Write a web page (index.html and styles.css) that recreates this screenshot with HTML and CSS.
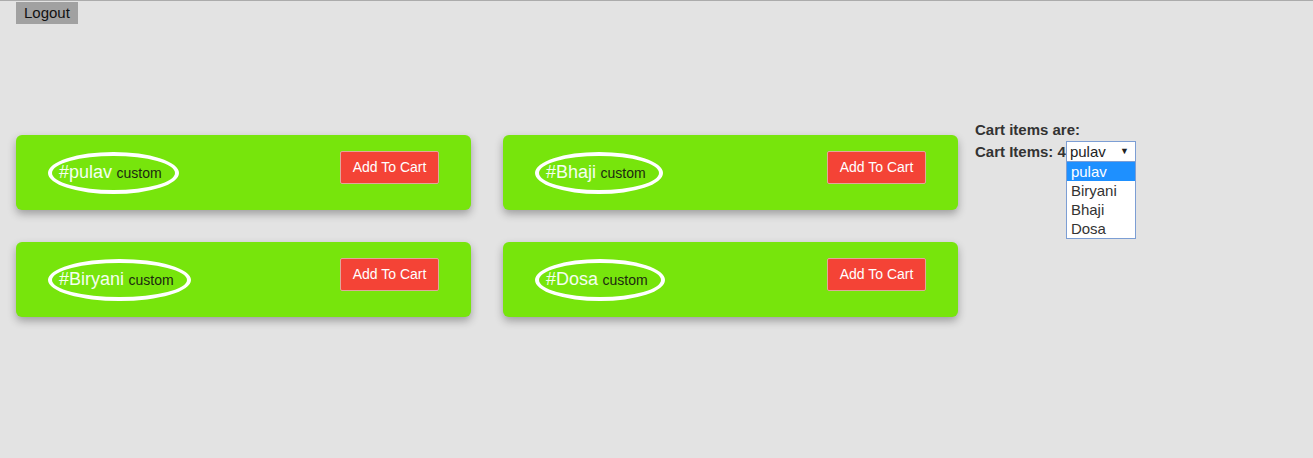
FILE: index.html
```html
<!DOCTYPE html>
<html>
<head>
<meta charset="utf-8">
<link rel="stylesheet" href="styles.css">
</head>
<body>
<div class="topbar"><button class="logout">Logout</button></div>
<div class="main">
  <div class="cards">
    <div class="card">
      <span class="tag"><span class="name">#pulav</span> <span class="custom">custom</span></span>
      <button class="add">Add To Cart</button>
    </div>
    <div class="card">
      <span class="tag"><span class="name">#Bhaji</span> <span class="custom">custom</span></span>
      <button class="add">Add To Cart</button>
    </div>
    <div class="card">
      <span class="tag"><span class="name">#Biryani</span> <span class="custom">custom</span></span>
      <button class="add">Add To Cart</button>
    </div>
    <div class="card">
      <span class="tag"><span class="name">#Dosa</span> <span class="custom">custom</span></span>
      <button class="add">Add To Cart</button>
    </div>
  </div>
  <div class="cart">
    <div class="cart-title">Cart items are:</div>
    <div class="cart-line">
      <span class="cart-count">Cart Items: 4</span>
      <div class="select">
        <div class="select-box"><span>pulav</span><span class="arrow">▼</span></div>
        <ul class="options">
          <li class="active">pulav</li>
          <li>Biryani</li>
          <li>Bhaji</li>
          <li>Dosa</li>
        </ul>
      </div>
    </div>
  </div>
</div>
</body>
</html>
```
FILE: styles.css
```css
html, body {
  margin: 0;
  padding: 0;
}
body {
  background: #e3e3e3;
  font-family: "Liberation Sans", Arial, sans-serif;
  border-top: 1px solid #ababab;
  min-height: 457px;
}
.topbar {
  padding: 1px 16px 0;
}
.logout {
  display: block;
  background: #a1a1a1;
  border: none;
  color: #111;
  font-family: "Liberation Sans", Arial, sans-serif;
  font-size: 15px;
  line-height: 17px;
  height: 22px;
  padding: 2px 8px 3px 8px;
  margin: 0;
}
.main {
  display: flex;
  align-items: flex-start;
  padding: 0 16px;
  margin-top: 97px;
}
.cards {
  display: grid;
  grid-template-columns: 455px 455px;
  column-gap: 32px;
  row-gap: 32px;
  margin-top: 14px;
}
.card {
  background: #77e50c;
  border-radius: 6px;
  box-shadow: 0 4px 9px rgba(0, 0, 0, 0.3);
  height: 75px;
  box-sizing: border-box;
  padding: 16px 32px 0 32px;
  display: flex;
  justify-content: space-between;
  align-items: flex-start;
}
.tag {
  margin-top: 1px;
  border: 4px solid #fff;
  border-radius: 50%;
  padding: 7px 13px 7px 7px;
  line-height: 19px;
  white-space: nowrap;
}
.name {
  color: #f4fff0;
  font-size: 18px;
}
.custom {
  color: #1c2a10;
  font-size: 14px;
}
.add {
  background: #f44336;
  color: #fff;
  border: 1px solid #e0a89a;
  border-radius: 2px;
  font-family: "Liberation Sans", Arial, sans-serif;
  font-size: 14px;
  line-height: 17px;
  padding: 7px 11px;
  margin: 0;
  width: 99px;
  height: 33px;
}
.cart {
  margin-left: 17px;
  font-size: 15px;
  font-weight: bold;
  color: #333;
  line-height: 17px;
}
.cart-title {
  height: 20px;
}
.cart-line {
  display: flex;
  align-items: center;
}
.select {
  position: relative;
  font-weight: normal;
}
.select-box {
  width: 70px;
  height: 21px;
  box-sizing: border-box;
  border: 1px solid #7c9ed4;
  background: #fff;
  display: flex;
  justify-content: space-between;
  align-items: center;
  padding: 0 6px 0 3px;
  color: #222;
  font-size: 15px;
}
.arrow {
  font-size: 9px;
}
.options {
  position: absolute;
  top: 21px;
  left: 0;
  width: 70px;
  box-sizing: border-box;
  margin: 0;
  padding: 0;
  list-style: none;
  background: #fff;
  border: 1px solid #7c9ed4;
  border-top: none;
  font-size: 15px;
  color: #333;
}
.options li {
  height: 19px;
  line-height: 19px;
  padding-left: 4px;
}
.options li.active {
  background: #1e90ff;
  color: #fff;
}
```
